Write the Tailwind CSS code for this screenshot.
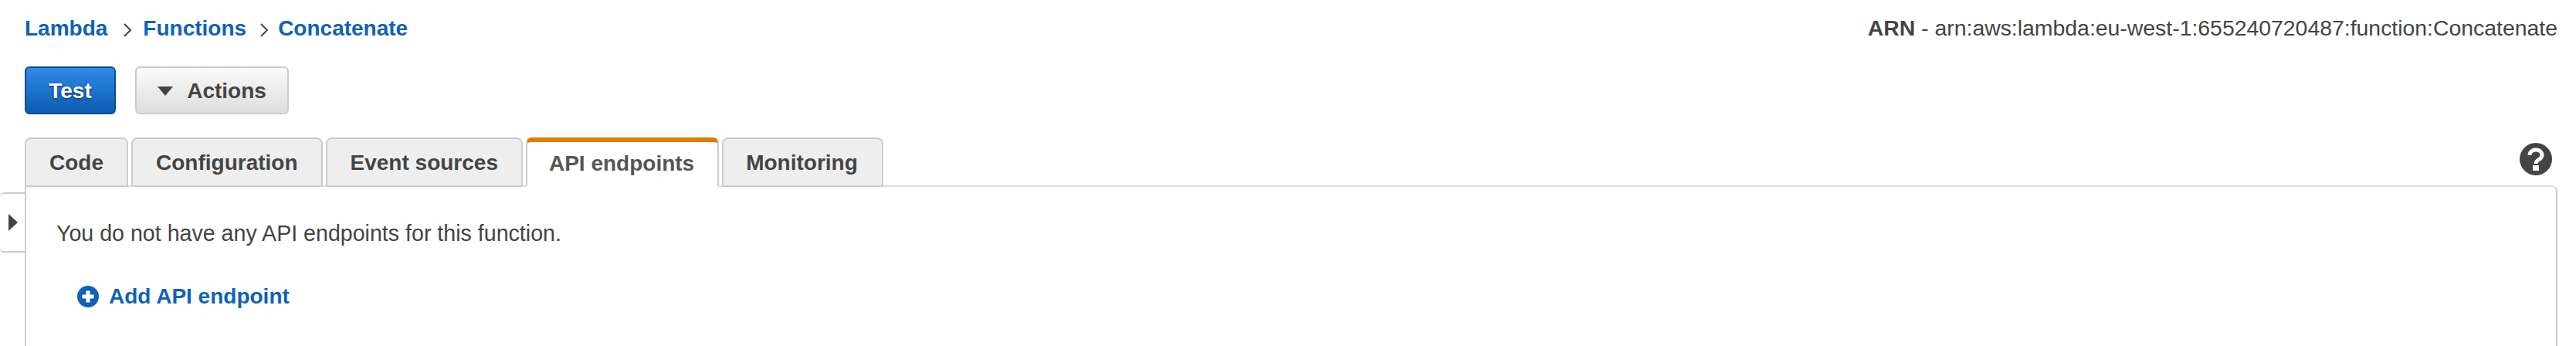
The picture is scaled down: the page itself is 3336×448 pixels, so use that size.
<!DOCTYPE html>
<html>
<head>
  <meta charset="UTF-8">
  <script src="https://cdn.jsdelivr.net/npm/@tailwindcss/browser@4"></script>
  <title>Lambda - Concatenate</title>
</head>
<body class="bg-white">
  <div class="relative w-[3336px] h-[448px] overflow-hidden bg-white text-[28px] leading-[32px] text-[#444] font-['Liberation_Sans',Arial,sans-serif]">

    <!-- breadcrumb + arn -->
    <div class="flex justify-between items-start pl-[32px] pr-[24px] pt-[21px] h-[86px]">
      <div class="flex items-center font-bold text-[#0f62b8]">
        <a>Lambda</a>
        <svg class="ml-[20px] mr-[14px] mt-[4px]" width="12" height="18" viewBox="0 0 12 18" fill="none" stroke="#444" stroke-width="2"><path d="M2 1l8 8-8 8"/></svg>
        <a>Functions</a>
        <svg class="ml-[17px] mr-[12px] mt-[4px]" width="12" height="18" viewBox="0 0 12 18" fill="none" stroke="#444" stroke-width="2"><path d="M2 1l8 8-8 8"/></svg>
        <a>Concatenate</a>
      </div>
      <div class="text-[28.4px] -mt-[1px]"><span class="font-bold">ARN</span> - arn:aws:lambda:eu-west-1:655240720487:function:Concatenate</div>
    </div>

    <!-- buttons -->
    <div class="flex gap-[25px] pl-[32px] h-[92px]">
      <button class="w-[118px] h-[62px] pt-[1px] rounded-[6px] border-2 border-[#0b4f94] bg-gradient-to-b from-[#2f8ae8] to-[#0b5cb0] text-white font-bold [text-shadow:0_1px_3px_rgba(0,0,0,0.6)]">Test</button>
      <button class="flex items-center justify-center gap-[18px] w-[199px] h-[62px] pt-[1px] rounded-[6px] border-2 border-[#ccc] bg-gradient-to-b from-[#fafafa] to-[#dedede] font-bold">
        <svg width="20" height="12" viewBox="0 0 20 12" fill="#444"><path d="M0 0h20L10 12z"/></svg>
        Actions
      </button>
    </div>

    <!-- tabs -->
    <div class="relative z-10 flex items-start justify-between h-[62px] pl-[32px] pr-[31px] font-bold">
      <div class="flex gap-[4px]">
        <div class="flex items-center h-[64px] px-[30px] pt-[1px] rounded-t-[8px] border-2 bg-[#eee] border-[#ccc]">Code</div>
        <div class="flex items-center h-[64px] px-[30px] pt-[1px] rounded-t-[8px] border-2 bg-[#eee] border-[#ccc]">Configuration</div>
        <div class="flex items-center h-[64px] px-[30px] pt-[1px] rounded-t-[8px] border-2 bg-[#eee] border-[#ccc]">Event sources</div>
        <div class="flex items-center h-[64px] pl-[28px] pr-[30px] rounded-t-[8px] border-2 border-t-[6px] bg-white border-[#ccc] border-t-[#e07b00] border-b-white text-[#555]">API endpoints</div>
        <div class="flex items-center h-[64px] pl-[29px] pr-[31px] pt-[1px] rounded-t-[8px] border-2 bg-[#eee] border-[#ccc]">Monitoring</div>
      </div>
      <svg class="mt-[7px]" width="42" height="42" viewBox="0 0 42 42">
        <circle cx="21" cy="21" r="21" fill="#444"/>
        <path d="M13 16c0-5 4-7 8-7s8 2 8 7c0 6-8 5-8 11" fill="none" stroke="#fff" stroke-width="5"/>
        <rect x="17" y="29" width="8" height="7" fill="#fff"/>
      </svg>
    </div>

    <!-- collapsed sidebar handle -->
    <div class="absolute left-0 top-[249px] flex items-center w-[33px] h-[78px] pl-[11px] rounded-l-[6px] border-y-2 border-[#ccc]">
      <svg width="12" height="22" viewBox="0 0 12 22" fill="#444"><path d="M0 0l12 11L0 22z"/></svg>
    </div>

    <!-- panel -->
    <div class="ml-[32px] w-[3280px] h-[240px] rounded-tr-[8px] border-2 border-[#ccc] border-t-[#ddd] pt-[44px] pl-[39px]">
      <p class="text-[28.6px] leading-[32px]">You do not have any API endpoints for this function.</p>
      <a class="flex items-center gap-[13px] mt-[50px] ml-[27px] font-bold text-[#0f62b8]">
        <svg width="28" height="28" viewBox="0 0 28 28">
          <circle cx="14" cy="14" r="14" fill="#0f62b8"/>
          <path d="M14 6.5v15M6.5 14h15" stroke="#fff" stroke-width="5"/>
        </svg>
        Add API endpoint
      </a>
    </div>
  </div>
</body>
</html>
